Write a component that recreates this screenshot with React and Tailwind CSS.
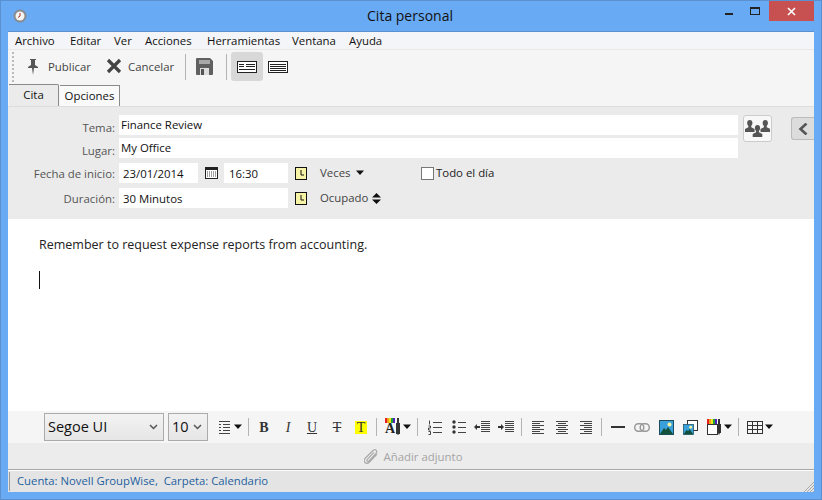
import React from "react";

const font = "font-['Open_Sans',sans-serif]";

const Sep = ({h = "h-[26px]"}) => <div className={`w-px ${h} bg-[#b4b4b4]`} />;

const Arrow = () => (
  <svg width="10" height="6" viewBox="0 0 10 6"><path d="M1 0.5h8L5 5z" fill="#111" /></svg>
);

const ClockBox = () => (
  <svg width="12" height="13" viewBox="0 0 12 13" className="block">
    <rect x="0.500" y="0.500" width="11" height="12" fill="#f6f3a6" stroke="#111" />
    <path d="M6 3v5h3" fill="none" stroke="#111" />
  </svg>
);

const Line = ({d}) => <path d={d} fill="none" stroke="#444" strokeWidth="1" />;

const Mountain = () => (
  <>
    <rect x="0.500" y="0.500" width="14" height="14" fill="#3aa0dc" stroke="#1d4d5c" />
    <circle cx="10.500" cy="4.500" r="2" fill="#f4f4a0" />
    <path d="M1 14l4-6 2 2 2-3 5 7z" fill="#12503a" />
  </>
);

const Rainbow = ({x, w}) => (
  <>
    <rect x={x} y="0" width={w} height="5" fill="#e82020" />
    <rect x={x + w / 5} y="0" width={w / 5} height="5" fill="#f0a020" />
    <rect x={x + (2 * w) / 5} y="0" width={w / 5} height="5" fill="#e8e820" />
    <rect x={x + (3 * w) / 5} y="0" width={w / 5} height="5" fill="#20a030" />
    <rect x={x + (4 * w) / 5} y="0" width={w / 5} height="5" fill="#5020c0" />
  </>
);

const Person = ({x, y}) => (
  <path
    transform={`translate(${x} ${y}) scale(1.200)`}
    d="M4 0c1.400 0 2.200 1 2.200 2.600 0 1-.4 1.900-1 2.400v1l2.800 1.400V10H0V7.400L2.800 6V5c-.6-.5-1-1.400-1-2.400C1.800 1 2.600 0 4 0z"
    fill="#555"
  />
);

const Field = ({children, className = ""}) => (
  <div className={`h-5 bg-white flex items-center text-[11.4px] text-[#111] ${className}`}>{children}</div>
);

const Label = ({children, className = ""}) => (
  <div className={`w-[107px] h-5 mr-[4px] text-right text-[11.4px] text-[#555] shrink-0 ${className}`}>{children}</div>
);

const App = () => {
  return (
    <div className={`w-[822px] h-[500px] flex flex-col bg-[#69aaf5] border border-[#5a8fd0] overflow-hidden ${font}`}>
      {/* title bar */}
      <div className="h-[30px] shrink-0 flex items-start relative">
        <div className="w-[37px] flex justify-center pt-[8px]">
          <svg width="14" height="14" viewBox="0 0 14 14">
            <circle cx="7" cy="7" r="6.500" fill="#8a8a8a" />
            <circle cx="7" cy="7" r="4.500" fill="#f4f4f4" />
            <path d="M7 4v3l-2 1.500" fill="none" stroke="#b03020" />
          </svg>
        </div>
        <div className="flex-1 text-center text-[14px] leading-[30px] pr-[39px] text-[#111]">Cita personal</div>
        <div className="absolute right-[7px] top-0 flex items-start">
          <div className="w-[24px] h-[20px] flex justify-center pt-[12px]"><div className="w-[8px] h-[2px] bg-[#222]" /></div>
          <div className="w-[28px] h-[20px] flex justify-center pt-[6px]"><div className="w-[10px] h-[8px] border border-t-2 border-[#222]" /></div>
          <div className="w-[45px] h-[20px] bg-[#c75050] flex items-center justify-center">
            <svg width="9" height="9" viewBox="0 0 9 9"><path d="M1 1l7 7M8 1L1 8" stroke="#fff" strokeWidth="1.600" /></svg>
          </div>
        </div>
      </div>

      {/* client area */}
      <div className="flex-1 mx-[7px] flex flex-col min-h-0 bg-white border-t border-[#5a8fd0]">
        {/* menu */}
        <div className="h-[18px] bg-[#f4f5f8] shrink-0 flex items-center pl-[7px] text-[11.4px] text-[#111] border-b border-[#e8e8e8]">
          <span className="w-[55px]">Archivo</span>
          <span className="w-[44px]">Editar</span>
          <span className="w-[31px]">Ver</span>
          <span className="w-[62px]">Acciones</span>
          <span className="w-[85px]">Herramientas</span>
          <span className="w-[57px]">Ventana</span>
          <span>Ayuda</span>
        </div>

        {/* toolbar */}
        <div className="h-[33px] bg-[#f5f5f5] shrink-0 flex items-center text-[11.4px] text-[#444]">
          <div className="w-[2px] h-[30px] ml-[4px] border-l-2 border-dotted border-[#bbb]" />
          <div className="ml-[13px] w-[70px] flex items-center gap-[9px]">
            <svg width="12" height="18" viewBox="0 0 12 18" className="shrink-0">
              <path d="M3 1h6v1H8v5l3 2v1H7l-1 7-1-7H1V9l3-2V2H3z" fill="#555" />
            </svg>
            <span>Publicar</span>
          </div>
          <div className="w-[79px] ml-[9px] flex items-center gap-[6px]">
            <svg width="16" height="16" viewBox="0 0 16 16" className="shrink-0"><path d="M2 2l12 12M14 2L2 14" stroke="#444" strokeWidth="3.200" /></svg>
            <span>Cancelar</span>
          </div>
          <Sep />
          <div className="ml-[10px]">
            <svg width="17" height="17" viewBox="0 0 17 17" className="block">
              <path d="M0 1a1 1 0 011-1h13l3 3v13a1 1 0 01-1 1H1a1 1 0 01-1-1z" fill="#606060" />
              <rect x="3" y="2" width="11" height="4" fill="#a8a8a8" />
              <rect x="4" y="10" width="9" height="7" fill="#ddd" />
              <rect x="5" y="11" width="3" height="6" fill="#555" />
            </svg>
          </div>
          <div className="ml-[13px]"><Sep /></div>
          <div className="ml-[4px] w-[32px] h-[29px] rounded-[3px] bg-[#d8d8d8] flex items-center justify-center">
            <svg width="20" height="12" viewBox="0 0 20 12">
              <rect x="0.500" y="0.500" width="19" height="11" fill="#fff" stroke="#222" />
              <path d="M2 3.500h5M2 5.500h5M9 3.500h9M9 5.500h9M2 8.500h16" stroke="#222" />
            </svg>
          </div>
          <div className="ml-[5px]">
            <svg width="20" height="12" viewBox="0 0 20 12" className="block">
              <rect x="0.500" y="0.500" width="19" height="11" fill="#fff" stroke="#222" />
              <path d="M2 3.500h16M2 5.500h16M2 7.500h16M2 9.500h16" stroke="#222" />
            </svg>
          </div>
        </div>

        {/* tabs */}
        <div className="h-[24px] bg-[#f5f5f5] shrink-0 flex items-end pl-[1px] text-[11.4px] text-[#111] border-b border-[#ddd]">
          <div className="w-[50px] h-[22px] bg-[#ebebeb] border-r border-t border-[#8a8a8a] rounded-tr-[2px] text-center leading-[20px]">Cita</div>
          <div className="w-[60px] h-[21px] ml-[1px] bg-[#fafafa] border-r border-t border-[#8a8a8a] text-center leading-[19px]">Opciones</div>
        </div>

        {/* form */}
        <div className="h-[112px] bg-[#ebebeb] shrink-0 relative pt-[8px]">
          <div className="flex flex-col gap-[3px] w-[730px]">
            <div className="flex items-center">
              <Label className="leading-[26px]">Tema:</Label>
              <Field className="flex-1 pl-[2px]">Finance Review</Field>
            </div>
            <div className="flex items-center">
              <Label className="leading-[26px]">Lugar:</Label>
              <Field className="flex-1 pl-[2px]">My Office</Field>
            </div>
          </div>
          <div className="absolute left-[735px] top-[8px] w-[29px] h-[27px] bg-[#f8f8f8] border border-[#ccc] rounded-[3px] flex items-center justify-center">
            <svg width="25" height="18" viewBox="0 0 25 18">
              <Person x="0" y="0" />
              <Person x="15.500" y="0" />
              <Person x="7.700" y="5" />
            </svg>
          </div>
          <div className="absolute right-0 top-[10px] w-[23px] h-[23px] bg-[#dcdcdc] border border-r-0 border-[#bbb] rounded-l-[3px] flex items-center justify-center">
            <svg width="10" height="12" viewBox="0 0 10 12"><path d="M8.500 0.500L2.500 6l6 5.500" fill="none" stroke="#555" strokeWidth="2.600" /></svg>
          </div>

          <div className="flex items-center h-5 mt-[5px]">
            <Label className="leading-[22px]">Fecha de inicio:</Label>
            <Field className="w-[79px] pl-[4px] pt-[2px]">23/01/2014</Field>
            <div className="w-[26px] flex justify-center">
              <svg width="13" height="12" viewBox="0 0 13 12">
                <rect x="0.500" y="0.500" width="12" height="11" fill="#fff" stroke="#222" />
                <rect x="0" y="0" width="13" height="3" fill="#222" />
                <path d="M2 5h9M2 7h9M2 9h9" stroke="#444" strokeDasharray="1 1" />
              </svg>
            </div>
            <Field className="w-[64px] pl-[5px] pt-[2px]">16:30</Field>
            <div className="ml-[7px] w-[12px]"><ClockBox /></div>
            <div className="ml-[13px] w-[101px] flex items-center gap-[5px] text-[11.4px] leading-[16px] text-[#444]">Veces <Arrow /></div>
            <div className="w-[13px] h-[13px] bg-white border border-[#777]" />
            <span className="ml-[2px] text-[11.4px] leading-[18px] text-[#222]">Todo el día</span>
          </div>
          <div className="flex items-center h-5 mt-[5px]">
            <Label className="leading-[22px]">Duración:</Label>
            <Field className="w-[169px] pl-[4px] pt-[2px]">30 Minutos</Field>
            <div className="ml-[7px] w-[12px]"><ClockBox /></div>
            <div className="ml-[13px] flex items-center gap-[4px] text-[11.4px] leading-[16px] text-[#444]">
              Ocupado
              <svg width="9" height="11" viewBox="0 0 9 11"><path d="M4.500 0L9 4.500H0zM4.500 11L0 6.500h9z" fill="#111" /></svg>
            </div>
          </div>
        </div>

        {/* editor */}
        <div className="flex-1 bg-white pl-[31px] pt-[17px] text-[12.5px] leading-[18px] text-[#222] min-h-0">
          <div>Remember to request expense reports from accounting.</div>
          <div className="w-px h-[18px] bg-[#111] mt-[17px]" />
        </div>

        {/* format toolbar */}
        <div className="h-[32px] bg-[#f5f5f5] shrink-0 flex items-center pl-[36px]">
          <div className="w-[120px] h-[28px] border border-[#ababab] bg-gradient-to-b from-[#f3f3f3] to-[#e6e6e6] flex items-center justify-between pl-[3px] pr-[5px] text-[14.5px] text-[#111]">
            Segoe UI
            <svg width="9" height="6" viewBox="0 0 9 6"><path d="M1 1l3.500 3.500L8 1" fill="none" stroke="#555" strokeWidth="1.500" /></svg>
          </div>
          <div className="ml-[4px] w-[40px] h-[28px] border border-[#ababab] bg-gradient-to-b from-[#f3f3f3] to-[#e6e6e6] flex items-center justify-between pl-[3px] pr-[5px] text-[14.5px] text-[#111]">
            10
            <svg width="9" height="6" viewBox="0 0 9 6"><path d="M1 1l3.500 3.500L8 1" fill="none" stroke="#555" strokeWidth="1.500" /></svg>
          </div>
          <div className="ml-[10px] flex items-center gap-[2px]">
            <svg width="13" height="13" viewBox="0 0 13 13"><Line d="M1 .5h11M5 3.500h7M5 6.500h7M5 9.500h7M1 12.500h11M1 3.500h2M1 6.500h2M1 9.500h2" /></svg>
            <Arrow />
          </div>
          <div className="ml-[5px]"><Sep h="h-[18px]" /></div>
          <div className="ml-[9px] w-[12px] text-center text-[14px] font-bold text-[#333] font-['Liberation_Serif',serif]">B</div>
          <div className="ml-[12px] w-[12px] text-center text-[14px] italic text-[#333] font-['Liberation_Serif',serif]">I</div>
          <div className="ml-[12px] w-[12px] text-center text-[14px] underline text-[#333] font-['Liberation_Serif',serif]">U</div>
          <div className="ml-[13px] w-[12px] text-center text-[14px] line-through text-[#333] font-['Liberation_Serif',serif]">T</div>
          <div className="ml-[12px] w-[12px] h-[13px] bg-[#ffff00] text-center text-[14px] leading-[13px] text-[#333] font-['Liberation_Serif',serif]">T</div>
          <div className="ml-[9px]"><Sep h="h-[18px]" /></div>
          <div className="ml-[8px] flex items-center">
            <div className="relative w-[17px] h-[18px]">
              <svg width="17" height="18" viewBox="0 0 17 18" className="block">
                <Rainbow x={0} w={10} />
                <path d="M12 0h2v5h1v11h-1l-1 1-1-1h-1V5h1z" fill="#333" />
              </svg>
              <span className="absolute left-0 top-[4px] text-[14px] leading-[14px] font-bold text-[#222] font-['Liberation_Serif',serif]">A</span>
            </div>
            <Arrow />
          </div>
          <div className="ml-[5px]"><Sep h="h-[18px]" /></div>
          <div className="ml-[10px]">
            <svg width="14" height="15" viewBox="0 0 14 15" className="block">
              <Line d="M5 2.500h9M5 7.500h9M5 12.500h9M1.500 .5v4M.5 6h2v2h-2v2h2M.5 11.500h2v3h-2" />
            </svg>
          </div>
          <div className="ml-[10px]">
            <svg width="14" height="14" viewBox="0 0 14 14" className="block">
              <circle cx="2" cy="2" r="1.700" fill="#333" />
              <circle cx="2" cy="7" r="1.700" fill="#333" />
              <circle cx="2" cy="12" r="1.700" fill="#333" />
              <Line d="M6 2.500h8M6 7.500h8M6 12.500h8" />
            </svg>
          </div>
          <div className="ml-[8px]">
            <svg width="16" height="14" viewBox="0 0 16 14" className="block">
              <path d="M0 7l3-3v2h3v2H3v2z" fill="#333" />
              <Line d="M7 1.500h9M7 3.500h9M7 5.500h9M7 7.500h9M7 9.500h9M7 11.500h9" />
            </svg>
          </div>
          <div className="ml-[8px]">
            <svg width="16" height="14" viewBox="0 0 16 14" className="block">
              <path d="M6 7L3 4v2H0v2h3v2z" fill="#333" />
              <Line d="M7 1.500h9M7 3.500h9M7 5.500h9M7 7.500h9M7 9.500h9M7 11.500h9" />
            </svg>
          </div>
          <div className="ml-[7px]"><Sep h="h-[18px]" /></div>
          <div className="ml-[10px]">
            <svg width="12" height="13" viewBox="0 0 12 13" className="block"><Line d="M0 .5h12M0 2.500h8M0 4.500h12M0 6.500h8M0 8.500h12M0 10.500h8M0 12.500h12" /></svg>
          </div>
          <div className="ml-[12px]">
            <svg width="12" height="13" viewBox="0 0 12 13" className="block"><Line d="M0 .5h12M2 2.500h8M0 4.500h12M2 6.500h8M0 8.500h12M2 10.500h8M0 12.500h12" /></svg>
          </div>
          <div className="ml-[12px]">
            <svg width="12" height="13" viewBox="0 0 12 13" className="block"><Line d="M0 .5h12M4 2.500h8M0 4.500h12M4 6.500h8M0 8.500h12M4 10.500h8M0 12.500h12" /></svg>
          </div>
          <div className="ml-[9px]"><Sep h="h-[18px]" /></div>
          <div className="ml-[9px] w-[14px] h-[2px] bg-[#333]" />
          <div className="ml-[9px]">
            <svg width="16" height="9" viewBox="0 0 16 9" className="block">
              <rect x="0.750" y="0.750" width="9" height="7.500" rx="3.500" fill="none" stroke="#999" strokeWidth="1.500" />
              <rect x="6.250" y="0.750" width="9" height="7.500" rx="3.500" fill="none" stroke="#999" strokeWidth="1.500" />
            </svg>
          </div>
          <div className="ml-[9px]">
            <svg width="15" height="15" viewBox="0 0 15 15" className="block"><Mountain /></svg>
          </div>
          <div className="ml-[9px]">
            <svg width="15" height="15" viewBox="0 0 15 15" className="block">
              <rect x="4.500" y="0.500" width="10" height="10" fill="#fff" stroke="#333" />
              <g transform="translate(0 4) scale(0.730)"><Mountain /></g>
            </svg>
          </div>
          <div className="ml-[9px] flex items-center">
            <svg width="16" height="16" viewBox="0 0 16 16" className="block">
              <Rainbow x={0} w={10} />
              <rect x="0.500" y="5.500" width="10" height="10" fill="#fff" stroke="#333" />
              <path d="M11 0h2v5h1v9h-1l-1 2-1-2h-1V5h1z" fill="#333" />
            </svg>
            <Arrow />
          </div>
          <div className="ml-[5px]"><Sep h="h-[18px]" /></div>
          <div className="ml-[8px] flex items-center gap-[1px]">
            <svg width="16" height="13" viewBox="0 0 16 13" className="block">
              <rect x="0.500" y="0.500" width="15" height="12" fill="none" stroke="#333" />
              <path d="M0 4.500h16M0 8.500h16M5.500 0v13M10.500 0v13" stroke="#333" />
            </svg>
            <Arrow />
          </div>
        </div>

        {/* attachment */}
        <div className="h-[27px] bg-[#ececec] shrink-0 flex items-center justify-center gap-[4px] text-[11.4px] text-[#a4a4a4] border-b border-[#a8a8a8] pl-[5px] pt-[2px]">
          <svg width="15" height="16" viewBox="0 0 15 16">
            <path d="M13 5l-7.500 8c-1.500 1.500-3.500 1.500-4.500.500s-1-3 .500-4.500L9 1.500c1-1 2.500-1 3.200-.2s.8 2-.2 3L5 12c-.6.600-1.400.600-1.800.200s-.4-1.200.2-1.800l6.500-7" fill="none" stroke="#aaa" strokeWidth="1.200" />
          </svg>
          Añadir adjunto
        </div>

        {/* status bar */}
        <div className="h-[22px] bg-[#e4e4e4] shrink-0 flex items-center pl-[1px] text-[11.3px] text-[#1f5f9e] relative border-t border-white">
          <div className="w-px h-[19px] bg-[#999]" />
          <span className="ml-[7px] whitespace-pre">Cuenta: Novell GroupWise,  Carpeta: Calendario</span>
          <svg className="absolute right-0 bottom-0" width="11" height="11" viewBox="0 0 11 11">
            <path d="M11 1L1 11M11 4l-7 7M11 7l-4 4M11 10l-1 1" stroke="#aaa" />
          </svg>
        </div>
      </div>
      <div className="h-[7px] shrink-0" />
    </div>
  );
};

export default App;
